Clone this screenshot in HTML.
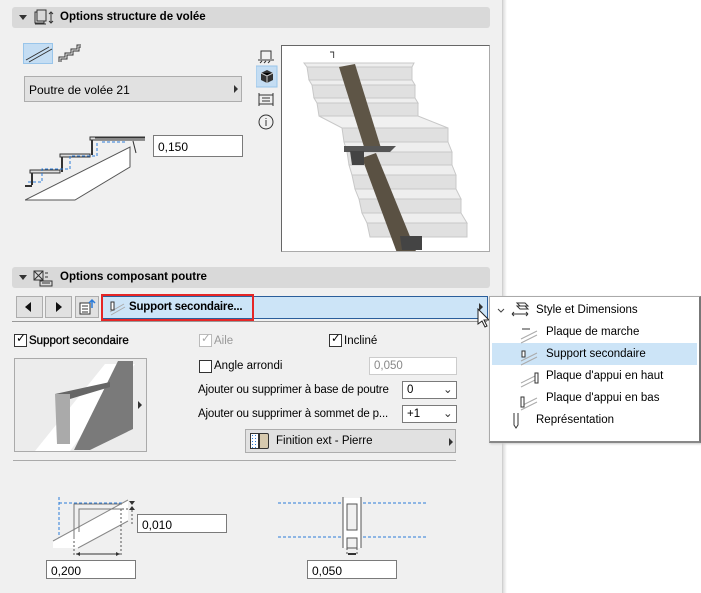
<!DOCTYPE html>
<html><head><meta charset="utf-8"><style>
*{box-sizing:border-box;margin:0;padding:0}
body{width:701px;height:593px;position:relative;overflow:hidden;background:#fff;font-family:"Liberation Sans",sans-serif;font-size:11.5px;color:#000}
.a{position:absolute}
.panel{left:0;top:0;width:503px;height:593px;background:#f0f0f0;border-right:1px solid #d0d0d0}
.hdr{background:#d9d9d9;border-radius:3px;height:21px;left:12px;width:478px}
.hdr b{position:absolute;left:48px;top:4px;font-size:11.5px}
.tri{position:absolute;left:7px;top:8px;width:0;height:0;border-left:4px solid transparent;border-right:4px solid transparent;border-top:5px solid #333}
.inp{background:#fff;border:1px solid #7a7a7a;height:20px;padding:2px 4px;font-size:11.5px}
.btn{background:#e1e1e1;border:1px solid #adadad}
.cb{width:13px;height:13px;border:1px solid #333;background:#fff}
.arr{width:0;height:0;border-top:4px solid transparent;border-bottom:4px solid transparent;border-left:4px solid #333}
</style></head><body>
<div class="a panel"></div>
<div class="a" style="left:503px;top:0;width:4px;height:593px;background:linear-gradient(90deg,#ddd,#fff)"></div>

<div class="a hdr" style="top:7px"><div class="tri"></div>
<svg class="a" style="left:21px;top:2px" width="22" height="18"><rect x="2" y="3" width="9" height="11" fill="none" stroke="#333"/><rect x="4" y="1" width="9" height="11" fill="#d9d9d9" stroke="#333"/><line x1="2" y1="15" x2="13" y2="15" stroke="#333"/><path d="M18 3v11M16 5l2-2 2 2M16 12l2 2 2-2" fill="none" stroke="#333"/></svg>
<b>Options structure de volée</b></div>

<div class="a" style="left:23px;top:43px;width:30px;height:21px;background:#c4ddf3;border:1px solid #99c5ea"></div>
<svg class="a" style="left:23px;top:43px" width="60" height="21"><path d="M3 17L26 4M6 19L29 6" stroke="#333" fill="none"/><path d="M36 19v-5h6v-4h6v-4h6v-4h4M38 19v-3h6v-4h6v-4h6v-4h2" stroke="#333" fill="none"/></svg>

<div class="a btn" style="left:24px;top:76px;width:218px;height:26px"><span class="a" style="left:4px;top:6px;font-size:12px">Poutre de volée 21</span><div class="a arr" style="left:209px;top:8px"></div></div>

<svg class="a" style="left:25px;top:133px" width="120" height="70"><path d="M0 67L105 14v20L50 67z" fill="#fff" stroke="#555"/><path d="M70 5h60M65 4h65v3H65zM35 21h30v3H35zM5 37h30v3H5z" fill="#ddd" stroke="#333"/><path d="M67 7v15M37 24v15M7 40v12M0 53h7" stroke="#333" stroke-width="2" fill="none"/><path d="M72 10v13h-27v13h-28v13h-14M77 9h25" stroke="#2b7bd8" stroke-dasharray="3 2" fill="none"/><path d="M108 8l3 12" stroke="#333"/></svg>
<div class="a inp" style="left:153px;top:135px;width:90px;height:22px;padding-top:4px;font-size:12px">0,150</div>

<svg class="a" style="left:256px;top:47px" width="22" height="86"><path d="M5 12V4h10v8M2 13h16M4 16l2-2M8 16l2-2M12 16l2-2" stroke="#333" fill="none"/><rect x="0" y="19" width="21" height="21" fill="#c4ddf3" stroke="#99c5ea"/><path d="M5 26l6-3 6 3v7l-6 3-6-3z" fill="#333"/><path d="M5 26l6 3 6-3M11 29v7" stroke="#ccc"/><path d="M3 46v13M17 46v13M3 48h14M3 57h14M6 51h8M6 54h8" stroke="#333" fill="none"/><circle cx="10" cy="75" r="7" fill="none" stroke="#333"/><path d="M10 73v6M10 71v1" stroke="#333"/></svg>

<div class="a" style="left:281px;top:45px;width:209px;height:207px;background:#fff;border:1px solid #aaa;border-top-color:#666;border-left-color:#666"></div>
<svg class="a" style="left:282px;top:46px" width="207" height="205">
<g stroke="#c8c8c8">
<path d="M22 17h110l-2 4H25z" fill="#eee"/><path d="M25 21h105v13H27z" fill="#e0e0e0"/>
<path d="M27 34h103l3 5H30z" fill="#eee"/><path d="M30 39h103v13H32z" fill="#e0e0e0"/>
<path d="M32 52h101l3 5H35z" fill="#eee"/><path d="M35 57h101v13H37z" fill="#e0e0e0"/>
<path d="M37 70h99l30 12H60z" fill="#f0f0f0"/><path d="M60 82h106v14H62z" fill="#e0e0e0"/>
<path d="M62 96h104l4 10H65z" fill="#eee"/><path d="M65 106h105v13H67z" fill="#e0e0e0"/>
<path d="M67 119h103l4 10H70z" fill="#eee"/><path d="M70 129h104v14H73z" fill="#e0e0e0"/>
<path d="M73 143h101l5 10H77z" fill="#eee"/><path d="M77 153h102v14H80z" fill="#e0e0e0"/>
<path d="M80 167h99l6 10H85z" fill="#eee"/><path d="M85 177h100v14H88z" fill="#e0e0e0"/>
</g>
<path d="M57 21l16-3 26 84-16 2z" fill="#5e5546"/><path d="M80 112l14-5 44 108-20 0z" fill="#5a5143"/>
<path d="M62 100h52l-6 6H62z" fill="#555"/><path d="M68 105h14v14H70z" fill="#444"/>
<path d="M118 190h22v14h-20z" fill="#444"/><text x="48" y="12" font-size="9" fill="#333">⅂</text></svg>

<div class="a hdr" style="top:267px"><div class="tri"></div>
<svg class="a" style="left:21px;top:2px" width="22" height="18"><rect x="1" y="2" width="9" height="9" fill="none" stroke="#333"/><path d="M1 2l9 9M10 2l-9 9M12 4h3M12 8h3M7 12h12v5H7zM9 14h8" stroke="#333" fill="none"/></svg>
<b>Options composant poutre</b></div>

<div class="a btn" style="left:16px;top:296px;width:27px;height:22px"><div class="a" style="left:8px;top:5px;width:0;height:0;border-top:5px solid transparent;border-bottom:5px solid transparent;border-right:6px solid #111"></div></div>
<div class="a btn" style="left:45px;top:296px;width:27px;height:22px"><div class="a" style="left:10px;top:5px;width:0;height:0;border-top:5px solid transparent;border-bottom:5px solid transparent;border-left:6px solid #111"></div></div>
<div class="a btn" style="left:75px;top:296px;width:24px;height:22px"><svg width="22" height="20"><path d="M4 6h10v11H4zM6 9h6M6 12h6M6 15h6" stroke="#333" fill="#fff"/><path d="M16 11V3M13 6l3-3 3 3" stroke="#2b7bd8" stroke-width="1.5" fill="none"/></svg></div>
<div class="a" style="left:102px;top:296px;width:386px;height:23px;background:#cce4f7;border:1px solid #2a5e9b"></div>
<div class="a" style="left:101px;top:294px;width:153px;height:27px;border:2px solid #e52626"></div>
<svg class="a" style="left:108px;top:298px" width="18" height="18"><path d="M2 14L16 6M3 17L17 9" stroke="#aaa"/><rect x="3" y="4" width="3" height="8" fill="#fff" stroke="#333"/></svg>
<b class="a" style="left:129px;top:301px;font-size:11.5px;letter-spacing:-0.2px">Support secondaire...</b>
<div class="a arr" style="left:479px;top:303px"></div>
<div class="a" style="left:12px;top:321px;width:475px;height:1px;background:#999"></div>
<svg class="a" style="left:477px;top:308px" width="14" height="22"><path d="M1 1v15l4-3 3 6 2-1-3-6h5z" fill="#fff" stroke="#222"/></svg>

<div class="a cb" style="left:14px;top:334px"></div><span class="a" style="left:16px;top:331px;font-size:12px">✓</span>
<b class="a" style="left:29px;top:335px;font-weight:normal;-webkit-text-stroke:.3px #000">Support secondaire</b>
<div class="a cb" style="left:199px;top:334px;border-color:#bbb"></div><span class="a" style="left:201px;top:331px;color:#aaa">✓</span><span class="a" style="left:214px;top:335px;color:#999">Aile</span>
<div class="a cb" style="left:329px;top:334px"></div><span class="a" style="left:331px;top:331px">✓</span><span class="a" style="left:344px;top:335px">Incliné</span>

<div class="a" style="left:14px;top:358px;width:133px;height:94px;border:1px solid #aaa;background:#ececec"></div>
<svg class="a" style="left:15px;top:359px" width="131" height="92"><path d="M20 92L90 5h30L55 92z" fill="#fff"/><path d="M103 2h15v68L75 91H59z" fill="#7a7a7a"/><path d="M40 35l55-12v5L55 40z" fill="#666"/><path d="M40 35h15v50H42z" fill="#aaa"/></svg>
<div class="a arr" style="left:138px;top:401px"></div>

<div class="a cb" style="left:199px;top:360px"></div><span class="a" style="left:214px;top:360px">Angle arrondi</span>
<div class="a inp" style="left:369px;top:357px;width:88px;height:18px;padding-top:2px;border-color:#ccc;color:#888">0,050</div>
<span class="a" style="left:198px;top:384px;letter-spacing:-0.15px">Ajouter ou supprimer à base de poutre</span>
<div class="a inp" style="left:402px;top:381px;width:55px;height:18px;padding-top:2px">0<span class="a" style="left:40px;top:0;color:#333">⌄</span></div>
<span class="a" style="left:198px;top:408px;letter-spacing:-0.15px">Ajouter ou supprimer à sommet de p...</span>
<div class="a inp" style="left:402px;top:405px;width:55px;height:18px;padding-top:2px">+1<span class="a" style="left:40px;top:0;color:#333">⌄</span></div>
<div class="a btn" style="left:245px;top:429px;width:211px;height:24px"><div class="a" style="left:4px;top:3px;width:9px;height:16px;border:1px solid #333;background:radial-gradient(#2b7bd8 0.6px,#fff 0.8px) 0 0/3px 3px"></div><div class="a" style="left:13px;top:3px;width:10px;height:16px;border:1px solid #333;background:#d6c9ae;border-radius:0 2px 2px 0"></div><span class="a" style="left:30px;top:5px">Finition ext - Pierre</span><div class="a arr" style="left:203px;top:8px"></div></div>
<div class="a" style="left:13px;top:460px;width:443px;height:1px;background:#aaa"></div>

<svg class="a" style="left:0;top:460px" width="460" height="100">
<path d="M59 43h69M59 37v42" stroke="#2b7bd8" stroke-dasharray="3 2" fill="none"/>
<path d="M53 81L128 40v21L78 88H53z" fill="#fff"/>
<path d="M53 81L128 40M78 88L128 61" stroke="#888"/>
<path d="M74 79V44h48M79 72V49h43" stroke="#777" fill="none"/>
<path d="M74 81v15M121 49v47M122 49h10M132 50v15" stroke="#555" stroke-dasharray="2 2" fill="none"/>
<path d="M76 94h44" stroke="#333"/><path d="M76 94l4-2v4zM120 94l-4-2v4z" fill="#333"/>
<path d="M129 41h6l-3 4zM129 50h6l-3-4z" fill="#333"/>
<path d="M278 43h148M278 77h148" stroke="#2b7bd8" stroke-dasharray="3 2"/>
<rect x="343" y="38" width="18" height="50" fill="#fff"/><path d="M343 37v51M361 37v51" stroke="#555"/>
<rect x="347" y="44" width="10" height="26" fill="#f0f0f0" stroke="#555"/><rect x="347" y="78" width="10" height="10" fill="#f0f0f0" stroke="#555"/>
<path d="M347 88v7M357 88v7" stroke="#555" stroke-dasharray="2 2"/><path d="M348 94h8" stroke="#333" stroke-width="2"/>
</svg>
<div class="a inp" style="left:137px;top:514px;width:90px;height:19px;padding-top:3px;font-size:12px">0,010</div>
<div class="a inp" style="left:46px;top:560px;width:90px;height:19px;padding-top:3px;font-size:12px">0,200</div>
<div class="a inp" style="left:307px;top:560px;width:90px;height:19px;padding-top:3px;font-size:12px">0,050</div>

<div class="a" style="left:489px;top:296px;width:212px;height:147px;background:#fff;border:1px solid #aaa;border-right:2px solid #777;border-bottom:2px solid #888;box-shadow:1px 1px 2px #ccc"></div>
<div class="a" style="left:492px;top:343px;width:205px;height:22px;background:#cce4f7"></div>
<svg class="a" style="left:495px;top:300px" width="50" height="130"><path d="M3 9l3 3 3-3" stroke="#444" fill="none"/><path d="M17 14h16M17 14l2-2M17 14l2 2M33 14l-2-2M33 14l-2 2M22 3h8l3 3h-8zM22 6h8l3 3h-8z" stroke="#333" fill="none"/><g stroke="#aaa"><path d="M26 39l16-8M26 43l16-8M26 61l16-8M26 65l16-8M26 83l16-8M26 87l16-8M26 106l16-8M26 110l16-8"/></g><path d="M27 29h8" stroke="#333"/><rect x="27" y="51" width="3" height="6" fill="#fff" stroke="#333"/><rect x="40" y="73" width="3" height="10" fill="#fff" stroke="#333"/><rect x="26" y="97" width="3" height="10" fill="#fff" stroke="#333"/><path d="M19 113v12l2 3 2-3v-12" stroke="#333" fill="none"/></svg>
<span class="a" style="left:536px;top:304px">Style et Dimensions</span>
<span class="a" style="left:546px;top:326px">Plaque de marche</span>
<span class="a" style="left:546px;top:348px">Support secondaire</span>
<span class="a" style="left:546px;top:370px">Plaque d'appui en haut</span>
<span class="a" style="left:546px;top:392px">Plaque d'appui en bas</span>
<span class="a" style="left:536px;top:414px">Représentation</span>
</body></html>
